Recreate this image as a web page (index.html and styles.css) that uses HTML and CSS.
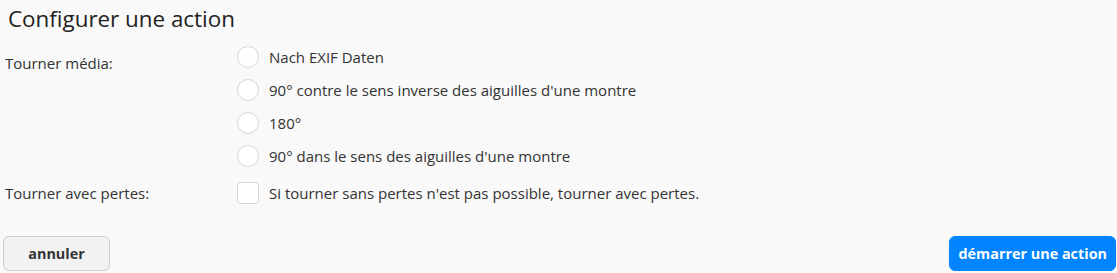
FILE: index.html
```html
<!DOCTYPE html>
<html lang="fr">
<head>
<meta charset="UTF-8">
<title>Configurer une action</title>
<link rel="stylesheet" href="styles.css">
</head>
<body>

<div class="dialog">
  <h3 class="title">Configurer une action</h3>

  <div class="row">
    <div class="label label-top">Tourner média:</div>
    <div class="options">
      <label class="option"><span class="radio"></span>Nach EXIF Daten</label>
      <label class="option"><span class="radio"></span>90° contre le sens inverse des aiguilles d'une montre</label>
      <label class="option"><span class="radio"></span>180°</label>
      <label class="option"><span class="radio"></span>90° dans le sens des aiguilles d'une montre</label>
    </div>
  </div>

  <div class="row row-check">
    <div class="label">Tourner avec pertes:</div>
    <label class="option"><span class="check"></span>Si tourner sans pertes n'est pas possible, tourner avec pertes.</label>
  </div>

  <div class="buttons">
    <button class="btn btn-cancel">annuler</button>
    <button class="btn btn-primary">démarrer une action</button>
  </div>
</div>

</body>
</html>
```

FILE: styles.css
```css
body, html {
  margin: 0;
  padding: 0;
  background: #f9f9f9;
  overflow: hidden;
}

body {
  font-family: "Open Sans", "Noto Sans", sans-serif;
  font-size: 15px;
  color: #333;
}

.dialog {
  padding: 0 1px 0 4px;
}

.title {
  margin: 0;
  padding: 4px 0 0 4px;
  font-size: 22.4px;
  font-weight: normal;
  line-height: 30px;
  color: #222;
}

.row {
  display: flex;
  align-items: flex-start;
}

.label {
  width: 232px;
  flex: none;
  padding-left: 1px;
  line-height: 22px;
}

.label-top {
  margin-top: 18px;
}

.options {
  display: flex;
  flex-direction: column;
  gap: 11px;
  padding-top: 12px;
}

.option {
  display: flex;
  align-items: center;
  gap: 10px;
  line-height: 22px;
}

.radio {
  width: 20px;
  height: 20px;
  border: 1px solid #d6d6d6;
  border-radius: 50%;
  background: #fff;
  flex: none;
}

.row-check {
  align-items: center;
  margin-top: 15px;
}

.check {
  width: 20px;
  height: 20px;
  border: 1px solid #d6d6d6;
  border-radius: 4px;
  background: #fff;
  flex: none;
}

.buttons {
  display: flex;
  justify-content: space-between;
  margin-top: 32px;
}

.btn {
  font-family: inherit;
  font-size: 14.4px;
  font-weight: bold;
  height: 35px;
  border-radius: 6px;
  padding: 0 8px;
}

.btn-cancel {
  width: 107px;
  margin-left: -1px;
  background: #f2f2f2;
  border: 1px solid #cfcfcf;
  color: #333;
}

.btn-primary {
  background: #0084ff;
  border: 1px solid #0084ff;
  color: #fff;
}
```
